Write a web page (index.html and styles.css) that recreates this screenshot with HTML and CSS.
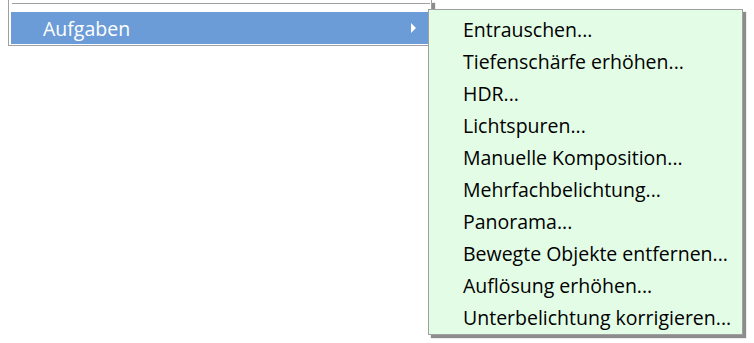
FILE: index.html
```html
<!DOCTYPE html>
<html lang="de">
<head>
  <meta charset="UTF-8">
  <title>Menü</title>
  <link rel="stylesheet" href="styles.css">
</head>
<body>
  <div class="menu">
    <div class="sep"></div>
    <div class="item active">
      <span class="label">Aufgaben</span>
      <span class="arrow"></span>
    </div>
  </div>

  <div class="submenu">
    <div class="item">Entrauschen...</div>
    <div class="item">Tiefenschärfe erhöhen...</div>
    <div class="item">HDR...</div>
    <div class="item">Lichtspuren...</div>
    <div class="item">Manuelle Komposition...</div>
    <div class="item">Mehrfachbelichtung...</div>
    <div class="item">Panorama...</div>
    <div class="item">Bewegte Objekte entfernen...</div>
    <div class="item">Auflösung erhöhen...</div>
    <div class="item">Unterbelichtung korrigieren...</div>
  </div>
</body>
</html>
```

FILE: styles.css
```css
body { margin: 0; background: #fff; font-family: "Open Sans", sans-serif; font-size: 19.5px; color: #000; }
.menu { margin-left: 8px; width: 422px; padding: 3px 0 1px; border: 1px solid #a0a0a0; border-top: none; background: #fff; box-shadow: 3px 3px 1px rgba(0,0,0,0.45); }
.sep { height: 1px; margin: 0 1px 8px 3px; background: #a0a0a0; }
.menu .item { display: flex; align-items: center; justify-content: space-between; height: 32px; margin: 0 3px 0 2px; padding-left: 32px; background: #6b9cd8; color: #fff; }
.label { line-height: 32px; padding-top: 2px; }
.arrow { width: 0; height: 0; margin-right: 12px; border-left: 5px solid #fff; border-top: 5px solid transparent; border-bottom: 5px solid transparent; }
.submenu { position: absolute; left: 428px; top: 9px; width: 313px; padding: 2px 0; border: 1px solid #a0a0a0; background: #e3fce6; box-shadow: 3px 3px 1px rgba(0,0,0,0.45); }
.submenu .item { height: 30px; padding: 2px 0 0 34px; line-height: 32px; white-space: nowrap; }
```
